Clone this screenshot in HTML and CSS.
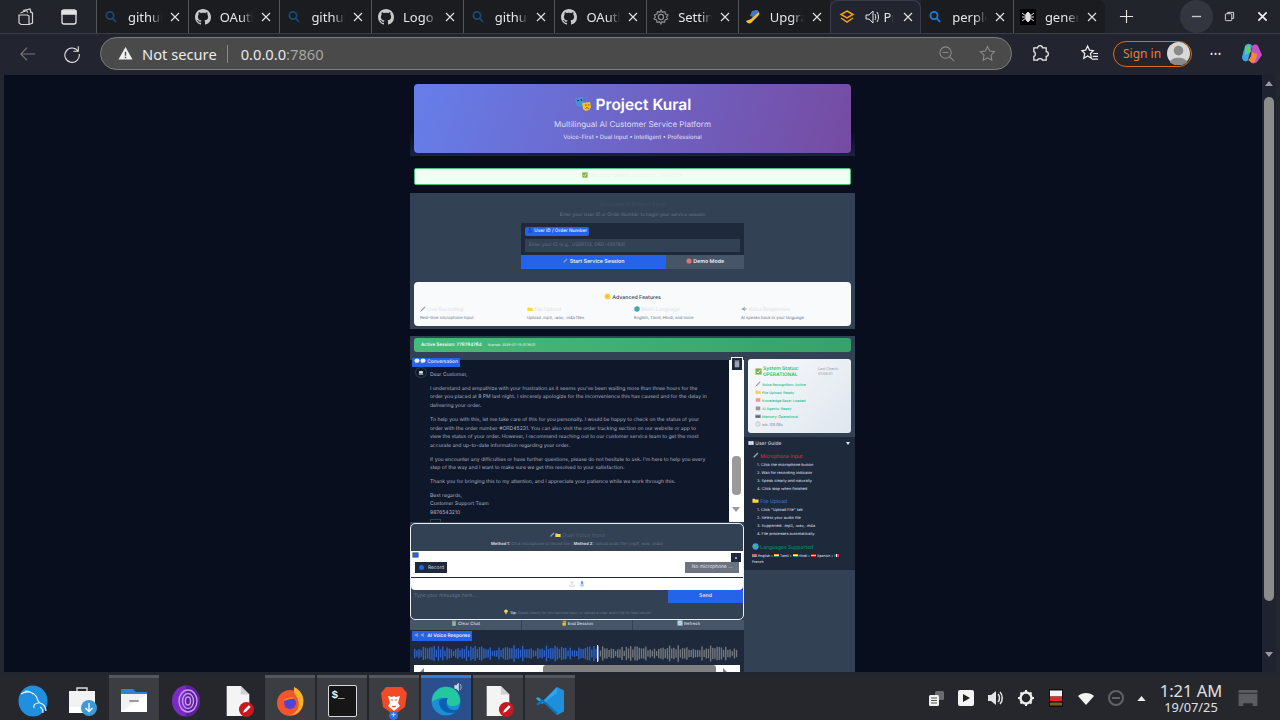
FILE: index.html
```html
<!DOCTYPE html>
<html lang="en">

<head>
    <title>Project Kural</title>
    <link rel="stylesheet" href="styles.css">
</head>

<body>
    <svg class="defs" width="0" height="0">
        <symbol id="gh" viewBox="0 0 16 16"><path fill="#c9c9c9" d="M8 0C3.58 0 0 3.58 0 8c0 3.54 2.29 6.53 5.47 7.59.4.07.55-.17.55-.38 0-.19-.01-.82-.01-1.49-2.01.37-2.53-.49-2.69-.94-.09-.23-.48-.94-.82-1.13-.28-.15-.68-.52-.01-.53.63-.01 1.08.58 1.23.82.72 1.21 1.87.87 2.33.66.07-.52.28-.87.51-1.07-1.78-.2-3.64-.89-3.64-3.95 0-.87.31-1.59.82-2.15-.08-.2-.36-1.02.08-2.12 0 0 .67-.21 2.2.82.64-.18 1.32-.27 2-.27.68 0 1.36.09 2 .27 1.53-1.04 2.2-.82 2.2-.82.44 1.1.16 1.92.08 2.12.51.56.82 1.27.82 2.15 0 3.07-1.87 3.75-3.65 3.95.29.25.54.73.54 1.48 0 1.07-.01 1.93-.01 2.2 0 .21.15.46.55.38A8.013 8.013 0 0016 8c0-4.42-3.58-8-8-8z"/></symbol>
        <symbol id="find" viewBox="0 0 16 16"><circle cx="7" cy="6.5" r="3.6" fill="none" stroke="currentColor" stroke-width="1.8"/><path d="M9.6 9.2l3.4 3.8" stroke="currentColor" stroke-width="1.8"/></symbol>
        <symbol id="x" viewBox="0 0 12 12"><path d="M2 2l8 8M10 2l-8 8" stroke="#e4e4e4" stroke-width="1.1"/></symbol>
        <symbol id="mic" viewBox="0 0 8 8"><path d="M6.8 1.2L2 6" stroke="#9ca3af" stroke-width="1.6"/><path d="M2 6L1 7" stroke="#4b5563" stroke-width="1.2"/></symbol>
        <symbol id="folder" viewBox="0 0 8 8"><path d="M.5 2h2.6l.7.8h3.7v3.9H.5z" fill="#fcd34d"/></symbol>
        <symbol id="check" viewBox="0 0 8 8"><rect x=".5" y=".5" width="7" height="7" fill="#7cb342"/><path d="M2 4.2l1.5 1.5L6.2 2" fill="none" stroke="#fff" stroke-width="1"/></symbol>
        <symbol id="globe" viewBox="0 0 8 8"><circle cx="4" cy="4" r="3.6" fill="#3b9dd8"/><path d="M2 2l2 .5L3.6 5 2 4zM5 4l1.6.3L5.6 6.4z" fill="#6abf4b"/></symbol>
        <symbol id="sound" viewBox="0 0 8 8"><path d="M1 3h1.6L5 1v6L2.6 5H1z" fill="#90a4ae"/><path d="M6 2.5c.8 1 .8 2 0 3" stroke="#5a6a7a" fill="none" stroke-width=".7"/></symbol>
        <symbol id="star" viewBox="0 0 8 8"><circle cx="4" cy="4" r="3.4" fill="#fcd34d"/><circle cx="4" cy="4" r="1.6" fill="#f5b920"/></symbol>
        <symbol id="bubble" viewBox="0 0 8 8"><ellipse cx="4" cy="3.6" rx="3.5" ry="2.8" fill="#e8edf3"/><path d="M2 5.5V7.4L4 6z" fill="#e8edf3"/></symbol>
        <symbol id="book" viewBox="0 0 8 8"><rect x=".5" y="1.5" width="7" height="5" fill="#dfe5ec"/><path d="M4 1.5v5" stroke="#8b97a5" stroke-width=".6"/></symbol>
        <symbol id="doc" viewBox="0 0 34 34"><path d="M5 1h15l9 9v23H5z" fill="#f4f4f4"/><path d="M20 1l9 9h-9z" fill="#cfcfcf"/><circle cx="26" cy="26" r="8" fill="#c8181f"/><path d="M22.5 29.500l1-3 5-5 2 2-5 5z" fill="#fff"/></symbol>
    </svg>

    <div class="window">
        <div class="tabstrip">
            <div class="strip-actions">
                <svg class="strip-icon" viewBox="0 0 20 20" fill="none" stroke="#d4d4d4" stroke-width="1.2"><path d="M7 3.500l7-1.500 1 3M4.500 6l6-2.500 1.500 2M3 8h8.500l1.500 1v8.500H5L3 16z"/><path d="M14 5l2.500 1v10L13 17.500"/></svg>
                <svg class="strip-icon" viewBox="0 0 20 20" fill="none" stroke="#e4e4e4" stroke-width="1.3"><rect x="3" y="3" width="14" height="14" rx="2"/><path d="M3 4h14v3H3z" fill="#e4e4e4"/></svg>
            </div>
            <div class="tab"><svg class="favicon find-dim"><use href="#find"/></svg><span class="tab-title">github</span><svg class="tab-x"><use href="#x"/></svg></div>
            <div class="tab"><svg class="favicon"><use href="#gh"/></svg><span class="tab-title">OAuth</span><svg class="tab-x"><use href="#x"/></svg></div>
            <div class="tab"><svg class="favicon find-dim"><use href="#find"/></svg><span class="tab-title">github</span><svg class="tab-x"><use href="#x"/></svg></div>
            <div class="tab"><svg class="favicon"><use href="#gh"/></svg><span class="tab-title">Logo</span><svg class="tab-x"><use href="#x"/></svg></div>
            <div class="tab"><svg class="favicon find-dim"><use href="#find"/></svg><span class="tab-title">github</span><svg class="tab-x"><use href="#x"/></svg></div>
            <div class="tab"><svg class="favicon"><use href="#gh"/></svg><span class="tab-title">OAuth</span><svg class="tab-x"><use href="#x"/></svg></div>
            <div class="tab"><svg class="favicon" viewBox="0 0 16 16" fill="none" stroke="#8c8c8c" stroke-width="1.2"><circle cx="8" cy="8" r="2.600"/><path d="M8 1l1.400 2.200 2.500-.6.600 2.500 2.500 1L13.600 8l1 1.900-2.500 1-.6 2.500-2.500-.6L8 15l-1.400-2.200-2.500.6-.6-2.500-2.500-1L2.400 8l-1-1.900 2.500-1 .6-2.500 2.500.6z"/></svg><span class="tab-title">Settings</span><svg class="tab-x"><use href="#x"/></svg></div>
            <div class="tab"><svg class="favicon" viewBox="0 0 16 16"><path d="M11 1c3 1 4 3 3 5L6 14c-2 1-4 0-5-2l5-2 4-4z" fill="#f2c230"/><path d="M7 2l5-1 2 2-6 5-3-1z" fill="#3f78c9"/></svg><span class="tab-title">Upgrade</span><svg class="tab-x"><use href="#x"/></svg></div>
            <div class="tab tab-active"><svg class="favicon" viewBox="0 0 16 16" fill="none" stroke="#f5a00f" stroke-width="1.5"><path d="M8 2l6 3.500L8 9 2 5.500z"/><path d="M2 9l6 4 6-4"/></svg><svg class="tab-sound" viewBox="0 0 16 16" fill="none" stroke="#e4e4e4" stroke-width="1"><path d="M2 6h3l4-4v12l-4-4H2z"/><path d="M11 5c1 2 1 4 0 6M13 3c2 3 2 7 0 10"/></svg><span class="tab-title tab-title-short">Project</span><svg class="tab-x"><use href="#x"/></svg></div>
            <div class="tab"><svg class="favicon find-blue"><use href="#find"/></svg><span class="tab-title">perplexity</span><svg class="tab-x"><use href="#x"/></svg></div>
            <div class="tab tab-last"><svg class="favicon" viewBox="0 0 16 16"><rect width="16" height="16" fill="#000"/><path d="M8 3l2 2v6l-2 2-2-2V5zM2 4l4 3M14 4l-4 3M2 8h4M14 8h-4M2 12l4-3M14 12l-4-3" stroke="#ddd" fill="#ddd"/></svg><span class="tab-title">generate</span><svg class="tab-x"><use href="#x"/></svg></div>
            <svg class="new-tab" viewBox="0 0 16 16"><path d="M8 1v14M1 8h14" stroke="#e4e4e4" stroke-width="1.200"/></svg>
            <div class="win-controls">
                <span class="win-btn win-min"><svg viewBox="0 0 12 12"><path d="M1 6h10" stroke="#c9c9c9" stroke-width="1.500"/></svg></span>
                <span class="win-btn"><svg viewBox="0 0 12 12" fill="none" stroke="#e4e4e4"><rect x="1.500" y="3" width="7" height="7.500" rx="1"/><path d="M4 3V1.500h6.500V8H8.500"/></svg></span>
                <span class="win-btn"><svg viewBox="0 0 12 12"><path d="M1.500 1.500l9 9M10.500 1.500l-9 9" stroke="#f0f0f0" stroke-width="1.800"/></svg></span>
            </div>
        </div>

        <div class="toolbar">
            <svg class="nav-icon nav-back" viewBox="0 0 20 20" fill="none" stroke="#777" stroke-width="1.200"><path d="M18 10H2M9 3l-7 7 7 7"/></svg>
            <svg class="nav-icon nav-reload" viewBox="0 0 20 20" fill="none" stroke="#e4e4e4" stroke-width="1.200"><path d="M16.500 6.500A8 8 0 1 0 18 10"/><path d="M17 1.500v5.500h-5.500"/></svg>
            <div class="address">
                <svg class="warn" viewBox="0 0 16 16"><path d="M8 1l7.500 13.500H.5z" fill="#f0f0f0"/><path d="M8 6v4.500M8 11.500v1.500" stroke="#4a4a4a" stroke-width="1.500"/></svg>
                <span class="not-secure">Not secure</span>
                <span class="address-sep"></span>
                <span class="url">0.0.0.0<span class="url-port">:7860</span></span>
                <svg class="addr-icon addr-zoom" viewBox="0 0 18 18" fill="none" stroke="#8c8c8c" stroke-width="1.100"><circle cx="8" cy="8" r="6"/><path d="M5 8h6M12.500 12.500l4.500 4.500"/></svg>
                <svg class="addr-icon" viewBox="0 0 18 18" fill="none" stroke="#8c8c8c" stroke-width="1.100"><path d="M9 1.500l2.300 4.900 5.200.7-3.800 3.700.9 5.300L9 13.500l-4.600 2.600.9-5.300L1.500 7.100l5.200-.7z"/></svg>
            </div>
            <svg class="tool-icon tool-ext" viewBox="0 0 20 20" fill="none" stroke="#f0f0f0" stroke-width="1.300"><path d="M7 4c0-3 5-3 5 0h4v4c3 0 3 5 0 5v4H12c0-2-5-2-5 0H3v-4c2 0 2-5 0-5V4z"/></svg>
            <svg class="tool-icon tool-fav" viewBox="0 0 20 20" fill="none" stroke="#f0f0f0" stroke-width="1.300"><path d="M8 2l2 4.500 4 .5-3 3 1 5-4-2.500L4 15l1-5-3-3 4-.5zM14 10h5M13.500 13h5.500M12.500 16H19"/></svg>
            <div class="sign-in"><span>Sign in</span><svg class="avatar" viewBox="0 0 24 24"><circle cx="12" cy="12" r="12" fill="#d8d8d8"/><circle cx="12" cy="9" r="5" fill="#8a8a8a"/><path d="M3 21c2-6 16-6 18 0-4 4-14 4-18 0z" fill="#8a8a8a"/></svg></div>
            <span class="more">&#8226;&#8226;&#8226;</span>
            <svg class="copilot" viewBox="0 0 24 24"><path d="M5 4c2-3 6-3 7 0l-4 14c-2 3-6 1-6-3z" fill="#3aa5e8"/><path d="M12 4c2-2 5-2 6 0l4 9-5 7c-2 2-6 2-7-1z" fill="#c64fc4"/><path d="M8 18c2-1 4-5 4-8l5 2c0 4-2 9-5 9z" fill="#f2883a"/><path d="M5 4l5-1 1 7-6 3z" fill="#5fcf6e"/></svg>
        </div>

        <div class="viewport">
            <div class="page-area">
                <div class="page">
                    <div class="hero-wrap">
                        <header class="hero">
                            <h1 class="hero-title">
                                <svg class="masks" viewBox="0 0 18 16"><path d="M1 2l8-1 1 7c-1 3-6 4-8 1z" fill="#4a90d9"/><path d="M8 7l8-1 1 5c-1 4-6 5-8 2z" fill="#f5c02c"/><circle cx="4" cy="4.500" r=".8" fill="#123"/><circle cx="7.500" cy="4" r=".8" fill="#123"/><path d="M11 9h1.500M14 9h1.500M11.500 12.500c1-1 2-1 3 0" stroke="#7a4a10" fill="none"/></svg>
                                Project Kural
                            </h1>
                            <p class="hero-sub">Multilingual AI Customer Service Platform</p>
                            <p class="hero-tag">Voice-First • Dual Input • Intelligent • Professional</p>
                        </header>
                    </div>

                    <div class="alert"><svg class="em"><use href="#check"/></svg> Welcome! Session started for: 778784764</div>

                    <section class="login">
                        <h2 class="login-title">Welcome to Project Kural</h2>
                        <p class="login-sub">Enter your User ID or Order Number to begin your service session</p>
                        <div class="login-form">
                            <div class="form-fields">
                                <span class="form-label"><svg class="em" viewBox="0 0 8 8"><circle cx="4" cy="2.500" r="1.800" fill="#1e4fa8"/><path d="M1 7.500c0-4 6-4 6 0z" fill="#1e4fa8"/></svg> User ID / Order Number</span>
                                <div class="form-input">Enter your ID (e.g., USER123, ORD-456789)</div>
                            </div>
                            <div class="form-buttons">
                                <span class="btn-start"><svg class="em"><use href="#mic"/></svg> Start Service Session</span>
                                <span class="btn-demo"><svg class="em" viewBox="0 0 8 8"><circle cx="4" cy="4" r="3.400" fill="#e57373"/></svg> Demo Mode</span>
                            </div>
                        </div>
                        <div class="features">
                            <h3 class="features-title"><svg class="em em-lg"><use href="#star"/></svg> Advanced Features</h3>
                            <div class="features-grid">
                                <div><h4><svg class="em"><use href="#mic"/></svg> Live Recording</h4><p>Real-time microphone input</p></div>
                                <div><h4><svg class="em"><use href="#folder"/></svg> File Upload</h4><p>Upload .mp3, .wav, .m4a files</p></div>
                                <div><h4><svg class="em"><use href="#globe"/></svg> Multi-Language</h4><p>English, Tamil, Hindi, and more</p></div>
                                <div><h4><svg class="em"><use href="#sound"/></svg> Voice Responses</h4><p>AI speaks back in your language</p></div>
                            </div>
                        </div>
                    </section>

                    <section class="session">
                        <div class="session-bar"><strong>Active Session: 778784764</strong><span>Started: 2025-07-19 01:16:01</span></div>
                        <div class="session-body">
                            <div class="session-main">
                                <span class="block-label label-chat"><svg class="em"><use href="#bubble"/></svg><svg class="em"><use href="#bubble"/></svg> Conversation</span>
                                <div class="chat">
                                    <div class="chat-log">
                                        <span class="bot-avatar"><svg viewBox="0 0 8 8"><rect x="1.500" y="1.500" width="5" height="3" fill="#e8edf3"/><rect x="1" y="4.500" width="6" height="2" fill="#7cb37c"/></svg></span>
                                        <p>Dear Customer,</p>
                                        <p>I understand and empathize with your frustration as it seems you've been waiting more than three hours for the<br>order you placed at 8 PM last night. I sincerely apologize for the inconvenience this has caused and for the delay in<br>delivering your order.</p>
                                        <p>To help you with this, let me take care of this for you personally. I would be happy to check on the status of your<br>order with the order number #ORD45231. You can also visit the order tracking section on our website or app to<br>view the status of your order. However, I recommend reaching out to our customer service team to get the most<br>accurate and up-to-date information regarding your order.</p>
                                        <p>If you encounter any difficulties or have further questions, please do not hesitate to ask. I'm here to help you every<br>step of the way and I want to make sure we get this resolved to your satisfaction.</p>
                                        <p>Thank you for bringing this to my attention, and I appreciate your patience while we work through this.</p>
                                        <p>Best regards,<br>Customer Support Team<br>9876543210</p>
                                        <span class="copy-btn"></span>
                                    </div>
                                    <div class="chat-scroll">
                                        <span class="trash"><svg viewBox="0 0 8 10"><path d="M2 2.500h4V8H2zM1.500 1.500h5" stroke="#9aa5b1" fill="#9aa5b1" stroke-width=".6"/></svg></span>
                                        <span class="chat-thumb"></span>
                                        <span class="down-tri"></span>
                                    </div>
                                </div>

                                <div class="voice-input">
                                    <h3 class="voice-title"><svg class="em"><use href="#mic"/></svg><svg class="em"><use href="#folder"/></svg> Dual Voice Input</h3>
                                    <p class="voice-methods"><b>Method 1:</b> Click microphone to record live | <b>Method 2:</b> Upload audio file (.mp3, .wav, .m4a)</p>
                                    <div class="audio">
                                        <div class="audio-row">
                                            <div class="audio-left">
                                                <span class="audio-badge"></span>
                                                <span class="rec-btn"><i class="rec-dot"></i>Record</span>
                                            </div>
                                            <div class="audio-right">
                                                <span class="audio-close"><i></i></span>
                                                <span class="nomic-btn">No microphone ...</span>
                                            </div>
                                        </div>
                                        <div class="audio-divider"></div>
                                        <div class="audio-tabs">
                                            <svg viewBox="0 0 8 8" fill="none" stroke="#b6bec8" stroke-width=".8"><path d="M1 5v2h6V5M4 5.500V1M2.500 2.500L4 1l1.500 1.500"/></svg>
                                            <svg viewBox="0 0 8 8"><rect x="2.500" y="0" width="3" height="5" rx="1.500" fill="#6b9cf0"/><rect x="1.500" y="4" width="5" height="3.500" rx="1" fill="#b9d0f7"/></svg>
                                        </div>
                                    </div>
                                    <div class="message-row">
                                        <span class="message-input">Type your message here...</span>
                                        <span class="send-btn">Send</span>
                                    </div>
                                    <p class="voice-tip"><svg class="em" viewBox="0 0 8 8"><circle cx="4" cy="3" r="2.400" fill="#fcd34d"/><rect x="3" y="5" width="2" height="2" fill="#b8a25a"/></svg> <b>Tip:</b> Speak clearly for microphone input, or upload a clear audio file for best results</p>
                                </div>

                                <div class="actions">
                                    <span><svg class="em" viewBox="0 0 8 8"><path d="M2 2h4v5.500H2zM1.500 1h5" stroke="#9fb4a8" fill="#9fb4a8" stroke-width=".6"/></svg> Clear Chat</span>
                                    <span><svg class="em" viewBox="0 0 8 8"><path d="M2 3.500h4.500v3c-1 1.500-3 1.500-4.500 0z" fill="#f5c02c"/><path d="M3 3.500V1M4.500 3.500V.8M6 3.500V1.200" stroke="#f5c02c"/></svg> End Session</span>
                                    <span><svg class="em" viewBox="0 0 8 8"><rect x=".5" y=".5" width="7" height="7" fill="#9ec7d8"/><path d="M2 4a2 2 0 0 1 3.600-1.200M6 4a2 2 0 0 1-3.600 1.200" stroke="#fff" stroke-width=".7" fill="none"/></svg> Refresh</span>
                                </div>

                                <div class="voice-out">
                                    <span class="block-label label-voice"><svg class="em"><use href="#sound"/></svg><svg class="em"><use href="#sound"/></svg> AI Voice Response</span>
                                    <svg class="wave" id="wave" viewBox="0 0 324 17"></svg>
                                    <div class="player-bar">
                                        <span class="left-tri"></span>
                                        <span class="player-thumb"></span>
                                        <span class="right-tri"></span>
                                    </div>
                                </div>
                            </div>

                            <aside class="session-side">
                                <div class="status-card">
                                    <div class="status-head">
                                        <svg class="status-check"><use href="#check"/></svg>
                                        <div class="status-name">System Status:<br>OPERATIONAL</div>
                                        <div class="status-time">Last Check:<br>01:06:01</div>
                                    </div>
                                    <ul class="status-list">
                                        <li><svg class="em"><use href="#mic"/></svg> Voice Recognition: Active</li>
                                        <li><svg class="em"><use href="#folder"/></svg> File Upload: Ready</li>
                                        <li><svg class="em" viewBox="0 0 8 8"><rect x="1" y="1.500" width="6" height="5" fill="#ef9a9a"/></svg> Knowledge Base: Loaded</li>
                                        <li><svg class="em" viewBox="0 0 8 8"><rect x="1" y="2" width="6" height="5" fill="#8d99a6"/><circle cx="2.800" cy="4" r=".7" fill="#e57373"/><circle cx="5.200" cy="4" r=".7" fill="#e57373"/></svg> AI Agents: Ready</li>
                                        <li><svg class="em" viewBox="0 0 8 8"><rect x=".5" y="1.500" width="7" height="5" fill="#5d6b7a"/><rect x=".5" y="1.500" width="7" height="1.500" fill="#dfe5ec"/></svg> Memory: Operational</li>
                                        <li class="status-dim"><svg class="em" viewBox="0 0 8 8"><circle cx="4" cy="4" r="3" fill="none" stroke="#a0a8b0" stroke-width=".7"/><path d="M4 2v2l1.500 1" stroke="#a0a8b0" stroke-width=".6" fill="none"/></svg> Init: 128.08s</li>
                                    </ul>
                                </div>
                                <div class="guide">
                                    <div class="guide-head"><span><svg class="em"><use href="#book"/></svg> User Guide</span><i class="guide-caret"></i></div>
                                    <h4 class="guide-red"><svg class="em em-lg"><use href="#mic"/></svg> Microphone Input</h4>
                                    <ol>
                                        <li>Click the microphone button</li>
                                        <li>Wait for recording indicator</li>
                                        <li>Speak clearly and naturally</li>
                                        <li>Click stop when finished</li>
                                    </ol>
                                    <h4 class="guide-blue"><svg class="em em-lg"><use href="#folder"/></svg> File Upload</h4>
                                    <ol>
                                        <li>Click "Upload File" tab</li>
                                        <li>Select your audio file</li>
                                        <li>Supported: .mp3, .wav, .m4a</li>
                                        <li>File processes automatically</li>
                                    </ol>
                                    <h4 class="guide-green"><svg class="em em-lg"><use href="#globe"/></svg> Languages Supported</h4>
                                    <p class="guide-langs"><i class="flag flag-us"></i>English • <i class="flag flag-in"></i>Tamil • <i class="flag flag-in"></i>Hindi • <i class="flag flag-es"></i>Spanish • <i class="flag flag-fr"></i><br>French</p>
                                </div>
                            </aside>
                        </div>
                    </section>
                </div>
            </div>
            <div class="page-scroll">
                <span class="up-tri scroll-tri"></span>
                <span class="page-thumb"></span>
                <span class="down-tri scroll-tri"></span>
            </div>
        </div>

        <div class="taskbar">
            <span class="task task-plain task-kali"><svg viewBox="0 0 32 32"><ellipse cx="16" cy="16" rx="14.500" ry="15.500" fill="#1f8fe0"/><path d="M4 9c6-4 12-2 15 2 2 3 1 6 4 7s6 3 6 8M8 6c3 0 6 1 8 3M22 18c-4 0-6 2-5 5M23 22c2 1 3 3 3 6" fill="none" stroke="#eaf5ff" stroke-width="1.200"/></svg></span>
            <span class="task task-plain task-bag"><svg viewBox="0 0 32 32"><path d="M11 6V3h10v3" fill="none" stroke="#ddd" stroke-width="1.400"/><rect x="3" y="6" width="26" height="22" fill="#f2f2f2"/><rect x="3" y="22" width="26" height="6" fill="#fff"/><circle cx="23" cy="23" r="8" fill="#3d9ad9"/><path d="M23 18v8M19.500 23l3.500 3.500 3.500-3.500" stroke="#fff" fill="none" stroke-width="1.300"/></svg></span>
            <span class="task task-open"><svg viewBox="0 0 32 32"><path d="M3 4h12l3 3h11v5H3z" fill="#2f7ee0"/><path d="M3 9h26v18H3z" fill="#f2f2f2"/><path d="M3 27L29 9v18z" fill="#ffffff"/><rect x="11" y="15" width="10" height="2" rx="1" fill="#9a9a9a"/></svg></span>
            <span class="task task-plain"><svg viewBox="0 0 32 32"><ellipse cx="16" cy="16" rx="14" ry="15.500" fill="#7b2bc4"/><path d="M16 1c8 0 14 7 14 15s-6 15-14 15z" fill="#5c1f9c"/><g fill="none" stroke="#c79bee" stroke-width="1.400"><ellipse cx="18" cy="16" rx="9" ry="11"/><ellipse cx="18" cy="16" rx="5.500" ry="7.500"/><ellipse cx="18" cy="16" rx="2.500" ry="4"/></g></svg></span>
            <span class="task task-plain"><svg viewBox="0 0 34 34"><use href="#doc"/></svg></span>
            <span class="task task-open"><svg viewBox="0 0 32 32"><circle cx="16" cy="18" r="13" fill="#f0552c"/><path d="M20 2c7 3 11 10 9 18-2 7-8 10-12 10 7-3 9-9 7-15-1-4-5-6-4-13z" fill="#ffb02c"/><circle cx="16" cy="18" r="6" fill="#5a3fd6"/><path d="M9 16c3-4 9-5 12-2-4-1-7 1-12 2z" fill="#ff8a2c"/></svg></span>
            <span class="task task-open"><span class="term"><span class="term-text">$_</span></span></span>
            <span class="task task-open task-brave"><svg viewBox="0 0 32 32"><path d="M8 2h16l5 6-2 14-11 8-11-8L3 8z" fill="#f04a26"/><path d="M10 11l4 1 2-1 2 1 4-1-2 7 2 3-6 5-6-5 2-3z" fill="#fff"/><path d="M13 15h2M17 15h2M14 21l2 1 2-1" stroke="#f04a26"/></svg><i class="brave-plus">+</i></span>
            <span class="task task-open task-edge"><svg viewBox="0 0 32 32"><circle cx="16" cy="16" r="14.500" fill="#1a8fd6"/><path d="M2 17C2 8 9 2 16 2c8 0 14 6 14 14 0 3-3 5-7 5-5 0-6-2-6-4 0-4-4-5-7-4-4 1-7 3-8 4z" fill="#25c7a0"/><path d="M9 17c0 6 5 11 12 11 4 0 7-2 8-4-5 2-11 1-12-4-1-3 0-6 1-7-5 0-9 1-9 4z" fill="#0b5fb0"/></svg><svg class="edge-sound" viewBox="0 0 12 16" fill="none" stroke="#cfd8dc"><path d="M1 6h2l3-3v10l-3-3H1z" fill="#cfd8dc"/><path d="M8 4c2 2 2 6 0 8"/></svg></span>
            <span class="task task-open"><svg viewBox="0 0 34 34"><use href="#doc"/></svg></span>
            <span class="task task-open"><svg viewBox="0 0 32 32"><path d="M23 2l7 3.500v21L23 30 9 17z" fill="#1f8fdc"/><path d="M23 2L9 16 4 12 2 13.500 8 19l15-11z" fill="#2aa7ee"/><path d="M23 30L9 17l-5 3.500-2-1.500 6-5 15 13z" fill="#0f6fb8"/></svg></span>
            <div class="tray">
                <svg class="tray-icon" viewBox="0 0 18 18"><rect x="8" y="2" width="9" height="9" rx="1.500" fill="#6a6c72"/><rect x="2" y="6" width="10" height="11" rx="1.500" fill="#f0f0f0"/><path d="M4 9h6M4 11.500h6M4 14h6" stroke="#555"/></svg>
                <svg class="tray-icon" viewBox="0 0 18 18"><rect x="1" y="1" width="16" height="16" rx="2" fill="#f4f4f4"/><path d="M6 5l7 4-7 4z" fill="#222"/></svg>
                <svg class="tray-icon" viewBox="0 0 18 18"><path d="M1 6h3l5-4v14l-5-4H1z" fill="#e4e4e4"/><path d="M11 5c2 2 2 6 0 8M13 3c3 3 3 9 0 12" stroke="#e4e4e4" stroke-width="1.500" fill="none"/></svg>
                <svg class="tray-icon" viewBox="0 0 18 18"><circle cx="9" cy="9" r="5.500" fill="none" stroke="#eee" stroke-width="2.500"/><path d="M9 1v3M9 14v3M1 9h3M14 9h3M3.500 3.500l2 2M12.500 12.500l2 2M14.500 3.500l-2 2M5.500 12.500l-2 2" stroke="#eee" stroke-width="2"/></svg>
                <svg class="tray-icon" viewBox="0 0 18 18"><rect x="2" y="0" width="14" height="18" rx="1" fill="#111"/><rect x="3" y="1.500" width="12" height="6" fill="#f4f4f4"/><rect x="3" y="7.500" width="12" height="4.500" fill="#d32f2f"/><path d="M4 13.500v3M6 13.500v3M8 13.500v3M10 13.500v3M12 13.500v3M14 13.500v3" stroke="#e0a82e"/></svg>
                <svg class="tray-icon" viewBox="0 0 18 18"><path d="M1 7c4-4 12-4 16 0l-8 9z" fill="#f4f4f4"/></svg>
                <svg class="tray-icon" viewBox="0 0 18 18"><circle cx="9" cy="9" r="7" fill="none" stroke="#5f6268" stroke-width="2"/><rect x="5" y="8" width="8" height="2" fill="#5f6268"/></svg>
                <svg class="tray-arrow" viewBox="0 0 10 6"><path d="M5 0l5 6H0z" fill="#eee"/></svg>
                <div class="clock"><span class="clock-time">1:21 AM</span><span class="clock-date">19/07/25</span></div>
                <svg class="tray-desk" viewBox="0 0 20 18"><path d="M0 0h20v3H0z" fill="#5a5c62"/><path d="M0 4h20v13h-5v-3H5v3H0z" fill="#5a5c62"/></svg>
            </div>
        </div>
    </div>

    <script src="script.js"></script>
</body>

</html>
```

FILE: styles.css
```css
* {
    padding: 0;
    margin: 0;
    box-sizing: border-box;
}

html,
body {
    width: 1280px;
    height: 720px;
    overflow: hidden;
}

body {
    font-family: "Noto Sans", sans-serif;
    background: #23262f;
}

ul,
ol {
    list-style: none;
}

.defs {
    position: absolute;
}

.window {
    display: flex;
    flex-direction: column;
    width: 1280px;
    height: 720px;
}

/* Tabs */
.tabstrip {
    display: flex;
    align-items: center;
    height: 33px;
    background: #22242c;
}

.strip-actions {
    display: flex;
    gap: 23px;
    width: 96px;
    padding-left: 16px;
}

.strip-icon {
    width: 20px;
    height: 20px;
}

.tab {
    display: flex;
    align-items: center;
    width: 91.7px;
    height: 33px;
    padding: 0 7px 0 3px;
    background: #1b1c20;
    border-left: 1px solid #55565a;
    color: #e6e6e6;
    font-size: 13px;
}

.favicon {
    flex: none;
    width: 16px;
    height: 16px;
    margin-left: 3px;
    color: #1f6fc0;
}

.find-dim {
    color: #174a78;
}

.find-blue {
    color: #1a7fd8;
}

.tab-title {
    flex: 1;
    margin: 0 7px 0 9px;
    overflow: hidden;
    white-space: nowrap;
    mask-image: linear-gradient(90deg, #000 65%, transparent);
}

.tab-x {
    flex: none;
    width: 12px;
    height: 12px;
}

.tab-active {
    padding-left: 6px;
    background: #22252f;
    border-left: 0;
    border-radius: 8px 8px 0 0;
    box-shadow: inset 0 1px 0 #3a3d48, inset 1px 0 0 #3a3d48, inset -1px 0 0 #3a3d48;
}

.tab-active + .tab {
    border-left: 0;
}

.tab-sound {
    flex: none;
    width: 16px;
    height: 16px;
    margin-left: 9px;
}

.tab-title-short {
    margin: 0 9px 0 4px;
}

.tab-last {
    border-radius: 0 8px 0 0;
}

.new-tab {
    width: 15px;
    height: 15px;
    margin-left: 14px;
}

.win-controls {
    display: flex;
    gap: 0;
    margin-left: auto;
    margin-right: 1px;
}

.win-btn {
    display: flex;
    align-items: center;
    justify-content: center;
    width: 33px;
    height: 33px;
}

.win-btn svg {
    width: 11px;
    height: 11px;
}

.win-min {
    background: #33363f;
    border-radius: 50%;
}

/* Address bar row */
.toolbar {
    display: flex;
    align-items: center;
    height: 42px;
    padding: 2px 0 4px;
    background: #22252f;
    border-top: 1px solid #3a3d48;
}

.nav-icon {
    width: 18px;
    height: 18px;
}

.nav-back {
    margin-left: 19px;
}

.nav-reload {
    margin-left: 26px;
}

.address {
    display: flex;
    align-items: center;
    width: 912px;
    height: 33px;
    margin-left: 19px;
    padding: 0 15px 0 17px;
    background: #4a4a4a;
    border: 1px solid #7d7d7d;
    border-radius: 17px;
    font-size: 14.7px;
}

.warn {
    width: 15px;
    height: 15px;
}

.not-secure {
    margin-left: 9px;
    color: #ececec;
}

.address-sep {
    width: 1px;
    height: 18px;
    margin: 0 13px 0 10px;
    background: #8a8a8a;
}

.url {
    color: #e8e8e8;
}

.url-port {
    color: #a6a6a6;
}

.addr-icon {
    width: 17px;
    height: 17px;
}

.addr-zoom {
    margin-left: auto;
    margin-right: 24px;
}

.tool-icon {
    width: 19px;
    height: 19px;
}

.tool-ext {
    margin-left: 19px;
}

.tool-fav {
    margin-left: 30px;
}

.sign-in {
    display: flex;
    align-items: center;
    justify-content: space-between;
    width: 79px;
    height: 26px;
    margin-left: 14px;
    padding: 0 1px 0 9px;
    border: 1px solid #e06c10;
    border-radius: 13px;
    color: #ef7d22;
    font-size: 12px;
}

.avatar {
    width: 23px;
    height: 23px;
}

.more {
    margin-left: 18px;
    color: #ececec;
    font-size: 8px;
    letter-spacing: 1px;
}

.copilot {
    width: 24px;
    height: 24px;
    margin-left: 18px;
}

/* Browser content */
.viewport {
    display: flex;
    height: 597px;
    margin: 0 4px;
    background: #090e1e;
    overflow: hidden;
}

.page-area {
    flex: 1;
    display: flex;
    justify-content: center;
    padding-right: 1px;
}

.page {
    width: 445px;
    height: 597px;
    font-family: Inter, sans-serif;
    text-rendering: geometricPrecision;
    overflow: hidden;
}

.page-scroll {
    position: relative;
    display: flex;
    flex-direction: column;
    align-items: center;
    width: 14px;
    background: #1f2330;
}

.page-thumb {
    width: 10px;
    height: 504px;
    margin-top: 11px;
    background: #8b8b8b;
    border-radius: 5px;
}

.up-tri,
.down-tri,
.left-tri,
.right-tri {
    display: block;
    width: 0;
    height: 0;
}

.scroll-tri.up-tri {
    margin-top: 6px;
    border: 4px solid transparent;
    border-top: 0;
    border-bottom: 5px solid #9a9a9a;
}

.scroll-tri.down-tri {
    margin-top: 51px;
    border: 4px solid transparent;
    border-bottom: 0;
    border-top: 5px solid #9a9a9a;
}

.em {
    display: inline-block;
    width: 6px;
    height: 6px;
    vertical-align: -1px;
}

.em-lg {
    width: 7px;
    height: 7px;
}

/* Hero */
.hero-wrap {
    height: 81px;
    padding: 9px 4px 3px;
    background: linear-gradient(180deg, #090e1e 70%, #1a2340);
}

.hero {
    height: 69px;
    padding-top: 11px;
    background: linear-gradient(105deg, #667eea, #764ba2);
    border-radius: 4px;
    text-align: center;
    color: #fff;
}

.hero-title {
    height: 20px;
    font-size: 15.5px;
    font-weight: 600;
    line-height: 20px;
}

.masks {
    width: 18px;
    height: 16px;
    vertical-align: -2px;
}

.hero-sub {
    margin-top: 3px;
    font-size: 8px;
    line-height: 12px;
    color: #dcdcf5;
}

.hero-tag {
    margin-top: 3px;
    font-size: 5.8px;
    font-weight: 500;
    line-height: 10px;
    color: #d5d5f0;
}

.alert {
    height: 17px;
    margin: 12px 4px 8px;
    background: #f0fff4;
    border: 1px solid #48bb78;
    border-radius: 2px;
    font-size: 4.7px;
    line-height: 15px;
    text-align: center;
    color: #e6f5ea;
}

/* Login */
.login {
    height: 136px;
    margin-bottom: 7px;
    padding: 8px 4px 3px;
    background: #334155;
    text-align: center;
}

.login-title {
    font-size: 5.5px;
    font-weight: 600;
    line-height: 8px;
    color: #3d4a5e;
}

.login-sub {
    margin-top: 2px;
    font-size: 4.7px;
    line-height: 8px;
    color: #64748b;
}

.login-form {
    width: 223px;
    height: 46px;
    margin: 4px 0 0 107px;
    background: #1e293b;
}

.form-fields {
    height: 32px;
    padding: 4px 4px 0;
    text-align: left;
}

.form-label {
    display: block;
    width: 64px;
    height: 9px;
    padding-left: 2px;
    background: #2563eb;
    border-radius: 2px;
    font-size: 4.7px;
    font-weight: 600;
    line-height: 9px;
    color: #dbe7ff;
    white-space: nowrap;
}

.form-input {
    height: 13px;
    margin-top: 3px;
    padding-left: 4px;
    background: #334155;
    border-radius: 1px;
    font-size: 4.7px;
    line-height: 13px;
    color: #5f6d80;
}

.form-buttons {
    display: flex;
    height: 14px;
    font-size: 5.3px;
    font-weight: 600;
    line-height: 14px;
    color: #e8edf5;
}

.btn-start {
    width: 145px;
    background: #2563eb;
}

.btn-demo {
    flex: 1;
    background: #475569;
}

.features {
    height: 44px;
    margin-top: 13px;
    padding: 11px 6px 0;
    background: #f8fafc;
    border-radius: 4px;
}

.features-title {
    font-size: 5.2px;
    font-weight: 600;
    line-height: 8px;
    color: #475569;
}

.features-grid {
    display: grid;
    grid-template-columns: repeat(4, 107px);
    margin-top: 4px;
    text-align: left;
}

.features-grid h4 {
    font-size: 5px;
    font-weight: 600;
    line-height: 8px;
    color: #e2e8f0;
}

.features-grid p {
    font-size: 4.1px;
    line-height: 7px;
    color: #64748b;
}

/* Session */
.session {
    position: relative;
    height: 336px;
    padding-top: 2px;
    background: #334155;
}

.session-bar {
    display: flex;
    align-items: center;
    gap: 6px;
    height: 14px;
    margin: 0 4px;
    padding-left: 7px;
    background: linear-gradient(90deg, #48bb78, #38a169);
    border-radius: 3px;
    color: #eafbf0;
}

.session-bar strong {
    font-size: 4.6px;
    font-weight: 600;
}

.session-bar span {
    font-size: 3.5px;
}

.session-body {
    display: flex;
    margin-top: 7px;
}

.session-main {
    position: relative;
    width: 334px;
    padding-top: 1px;
}

.block-label {
    position: absolute;
    left: 2px;
    z-index: 1;
    height: 9px;
    padding: 0 2px;
    background: #2563eb;
    font-size: 4.8px;
    font-weight: 500;
    line-height: 9px;
    color: #e6eeff;
    white-space: nowrap;
}

.label-chat {
    top: -1px;
    width: 48px;
}

.label-voice {
    bottom: 31px;
    width: 60px;
    height: 10px;
    line-height: 10px;
    font-weight: 600;
}

.chat {
    display: flex;
    height: 162px;
    margin-bottom: 1px;
}

.chat-log {
    position: relative;
    flex: 1;
    padding: 11px 0 0 20px;
    background: #0f172a;
    font-size: 5.1px;
    line-height: 8.7px;
    color: #a9b3c1;
    white-space: nowrap;
}

.chat-log p {
    margin-bottom: 5px;
}

.bot-avatar {
    position: absolute;
    left: 5px;
    top: 7px;
    width: 12px;
    height: 11px;
    padding: 2px;
    border: 1px solid #2a3a50;
    border-radius: 50%;
}

.bot-avatar svg {
    display: block;
    width: 6px;
    height: 6px;
}

.copy-btn {
    position: absolute;
    left: 20px;
    bottom: 0;
    width: 11px;
    height: 3px;
    border: 1px solid #334155;
    border-bottom: 0;
}

.chat-scroll {
    position: relative;
    width: 15px;
    padding-top: 96px;
    background: #fff;
}

.trash {
    position: absolute;
    top: -2px;
    left: 3px;
    width: 10px;
    height: 12px;
    padding: 1px;
    background: #1e293b;
    box-shadow: 0 0 0 1px #fff;
}

.trash svg {
    display: block;
    width: 8px;
    height: 10px;
}

.chat-thumb {
    display: block;
    width: 9px;
    height: 39px;
    margin-left: 3px;
    background: #9a9a9a;
    border-radius: 4px;
}

.chat-scroll .down-tri {
    margin: 12px 0 0 3px;
    border: 4.500px solid transparent;
    border-bottom: 0;
    border-top: 5px solid #9a9a9a;
}

/* Voice input */
.voice-input {
    height: 97px;
    padding-top: 8px;
    background: #334155;
    border: 1px solid #e8edf3;
    border-radius: 5px;
    text-align: center;
}

.voice-title {
    font-size: 5.5px;
    font-weight: 500;
    line-height: 7px;
    color: #4b5a6e;
}

.voice-methods {
    margin-bottom: 4px;
    font-size: 4px;
    line-height: 7px;
    color: #64748b;
}

.voice-methods b {
    color: #cbd5e1;
}

.audio {
    height: 39px;
    background: #fff;
    border-radius: 0 0 4px 4px;
}

.audio-row {
    display: flex;
    justify-content: space-between;
    height: 22px;
    padding: 2px 4px 0 2px;
}

.audio-left,
.audio-right {
    display: flex;
    flex-direction: column;
}

.audio-right {
    align-items: flex-end;
}

.audio-badge {
    width: 5px;
    height: 4px;
    background: #2563eb;
    box-shadow: 0 0 0 .5px #1e293b;
}

.rec-btn {
    display: flex;
    align-items: center;
    width: 32px;
    height: 11px;
    margin: 5px 0 0 2px;
    padding-left: 4px;
    background: #1e293b;
    font-size: 4.800px;
    color: #cbd5e1;
}

.rec-dot {
    width: 5px;
    height: 5px;
    margin-right: 4px;
    background: #2563eb;
    border-radius: 50%;
}

.audio-close {
    display: flex;
    align-items: center;
    justify-content: center;
    width: 10px;
    height: 9px;
    margin-right: -2px;
    background: #1e293b;
}

.audio-close i {
    width: 2px;
    height: 2px;
    background: #94a3b8;
}

.nomic-btn {
    width: 54px;
    height: 11px;
    background: #6b7280;
    font-size: 4.800px;
    line-height: 11px;
    color: #e5e7eb;
}

.audio-divider {
    height: 1px;
    margin-top: 4px;
    background: #1e293b;
}

.audio-tabs {
    display: flex;
    align-items: center;
    justify-content: center;
    gap: 4px;
    height: 12px;
}

.audio-tabs svg {
    width: 6px;
    height: 6px;
}

.message-row {
    display: flex;
    height: 13px;
}

.message-input {
    flex: 1;
    padding-left: 3px;
    font-size: 5px;
    line-height: 13px;
    color: #64748b;
    text-align: left;
}

.send-btn {
    width: 75px;
    background: #2563eb;
    font-size: 5.200px;
    font-weight: 600;
    line-height: 12px;
    color: #dbe7ff;
}

.voice-tip {
    margin-top: 6px;
    font-size: 3.6px;
    line-height: 6px;
    color: #64748b;
}

.voice-tip b {
    color: #cbd5e1;
}

.actions {
    display: grid;
    grid-template-columns: 111px 111px 112px;
    height: 10px;
    background: #475569;
    font-size: 4.300px;
    font-weight: 600;
    line-height: 9px;
    text-align: center;
    color: #cbd5e1;
}

.actions span + span {
    border-left: 1px solid #334155;
}

.voice-out {
    position: relative;
    height: 42px;
    padding-top: 15px;
    background: #1e293b;
}

.wave {
    display: block;
    width: 324px;
    height: 17px;
    margin-left: 4px;
}

.player-bar {
    display: flex;
    align-items: flex-start;
    width: 326px;
    height: 7px;
    margin: 3px 0 0 4px;
    background: #fff;
}

.player-thumb {
    width: 173px;
    height: 7px;
    margin-left: 119px;
    background: #808080;
    border-radius: 3px 3px 0 0;
}

.left-tri {
    margin: 3px 0 0 6px;
    border: 4px solid transparent;
    border-left: 0;
    border-right: 4px solid #808080;
}

.right-tri {
    margin: 3px 0 0 7px;
    border: 4px solid transparent;
    border-right: 0;
    border-left: 4px solid #808080;
}

/* Right column */
.session-side {
    width: 111px;
}

.status-card {
    width: 103px;
    height: 74px;
    margin-left: 4px;
    padding: 7px 0 0 7px;
    background: linear-gradient(135deg, #f8fafc, #dfe6ee);
    border-radius: 3px;
}

.status-head {
    display: flex;
    height: 12px;
    margin-bottom: 3px;
}

.status-check {
    flex: none;
    width: 7px;
    height: 7px;
    margin: 2px 1px 0 0;
}

.status-name {
    width: 55px;
    font-size: 4.900px;
    font-weight: 600;
    line-height: 6px;
    color: #22c55e;
}

.status-time {
    font-size: 3.700px;
    line-height: 5px;
    color: #8a94a3;
}

.status-list li {
    font-size: 3.6px;
    font-weight: 500;
    line-height: 8px;
    color: #10b981;
    white-space: nowrap;
}

.status-list .status-dim {
    color: #7b8794;
}

.guide {
    height: 133px;
    margin-top: 4px;
    padding: 2px 3px 0 8px;
    background: #1e293b;
    color: #cbd5e1;
}

.guide-head {
    display: flex;
    align-items: center;
    justify-content: space-between;
    margin-left: -4px;
    height: 8px;
    font-size: 4.900px;
    font-weight: 500;
    color: #cbd5e1;
}

.guide-caret {
    margin-right: 2px;
    border: 2px solid transparent;
    border-bottom: 0;
    border-top: 3px solid #e2e8f0;
}

.guide h4 {
    margin-top: 5px;
    font-size: 5px;
    font-weight: 500;
    line-height: 8px;
}

.guide h4.guide-blue {
    margin-top: 4px;
}

.guide-red {
    color: #c62f3a;
}

.guide-blue {
    color: #2f74c0;
}

.guide-green {
    color: #0f8a63;
}

.guide ol {
    counter-reset: step;
    padding-left: 5px;
}

.guide li {
    counter-increment: step;
    font-size: 3.900px;
    font-weight: 500;
    line-height: 8px;
    white-space: nowrap;
}

.guide li::before {
    content: counter(step) ".  ";
}

.guide-langs {
    margin-top: 1px;
    font-size: 3.500px;
    font-weight: 500;
    line-height: 6px;
    white-space: nowrap;
}

.flag {
    display: inline-block;
    width: 5px;
    height: 3.500px;
    margin-right: 1px;
}

.flag-us {
    background: linear-gradient(180deg, #c66 50%, #99a 50%);
}

.flag-in {
    background: linear-gradient(180deg, #f93 33%, #eee 33%, #eee 66%, #386 66%);
}

.flag-es {
    background: linear-gradient(180deg, #c22 25%, #fc3 25%, #fc3 75%, #c22 75%);
}

.flag-fr {
    background: linear-gradient(90deg, #25a 33%, #fff 33%, #fff 66%, #d33 66%);
}

/* Taskbar */
.taskbar {
    display: flex;
    align-items: stretch;
    height: 45px;
    margin-top: 3px;
    padding-left: 8px;
    background: #25272d;
}

.task {
    position: relative;
    display: flex;
    align-items: center;
    justify-content: center;
    width: 50px;
    margin-left: 2px;
    padding-top: 3px;
}

.task svg {
    width: 32px;
    height: 32px;
}

.task-plain {
    border-top: 3px solid transparent;
}

.task-open {
    background: #3b3d43;
    border-top: 3px solid #55575c;
}

.task-edge {
    background: #2a4f8c;
    border-top-color: #2f7fe0;
}

.task-edge svg.edge-sound {
    position: absolute;
    top: 3px;
    right: 8px;
    width: 9px;
    height: 12px;
}

.task-kali {
    margin-left: 0;
}

.task-bag {
    margin-left: -1px;
}

.term {
    display: block;
    width: 29px;
    height: 32px;
    background: #161616;
    border: 1px solid #d8d8d8;
    border-radius: 2px;
    padding-left: 3px;
    font-family: "Liberation Mono", monospace;
    font-size: 11px;
    font-weight: 700;
    line-height: 18px;
    color: #f0f0f0;
}

.brave-plus {
    position: absolute;
    left: 20px;
    bottom: 0;
    width: 9px;
    height: 9px;
    background: #2f6fe0;
    border-radius: 50%;
    font-family: "Liberation Sans", sans-serif;
    font-size: 9px;
    font-style: normal;
    line-height: 9px;
    text-align: center;
    color: #fff;
}

.tray {
    display: flex;
    align-items: center;
    margin-left: auto;
    padding: 1px 22px 0 0;
}

.tray-icon {
    width: 18px;
    height: 18px;
    margin-right: 12px;
}

.tray-arrow {
    width: 9px;
    height: 5px;
    margin-right: 12px;
}

.clock {
    display: flex;
    flex-direction: column;
    align-items: center;
    width: 66px;
    margin-right: 14px;
    color: #e0e0e0;
}

.clock-time {
    font-size: 16.500px;
    line-height: 18px;
}

.clock-date {
    font-size: 12.800px;
    line-height: 14px;
}

.tray-desk {
    width: 20px;
    height: 17px;
}
```

FILE: script.js
```js
// waveform bars for the voice response player
const wave = document.querySelector('#wave');
const total = 150;
const played = 85;

for (let i = 0; i < total; i++) {
    const env = 0.25 + 0.4 * Math.abs(Math.sin(i * 0.17)) + 0.35 * Math.abs(Math.sin(i * 0.83 + 1));
    const h = Math.max(2, 17 * env * (0.5 + 0.5 * Math.abs(Math.cos(i * 1.7))));
    const bar = document.createElementNS('http://www.w3.org/2000/svg', 'rect');
    bar.setAttribute('x', i * 2.16);
    bar.setAttribute('y', (17 - h) / 2);
    bar.setAttribute('width', 1.4);
    bar.setAttribute('height', h);
    bar.setAttribute('fill', i < played ? '#2f62c8' : '#737880');
    wave.appendChild(bar);
}

const head = document.createElementNS('http://www.w3.org/2000/svg', 'rect');
head.setAttribute('x', played * 2.16 - 0.5);
head.setAttribute('y', 0);
head.setAttribute('width', 1);
head.setAttribute('height', 17);
head.setAttribute('fill', '#fff');
wave.appendChild(head);
```
